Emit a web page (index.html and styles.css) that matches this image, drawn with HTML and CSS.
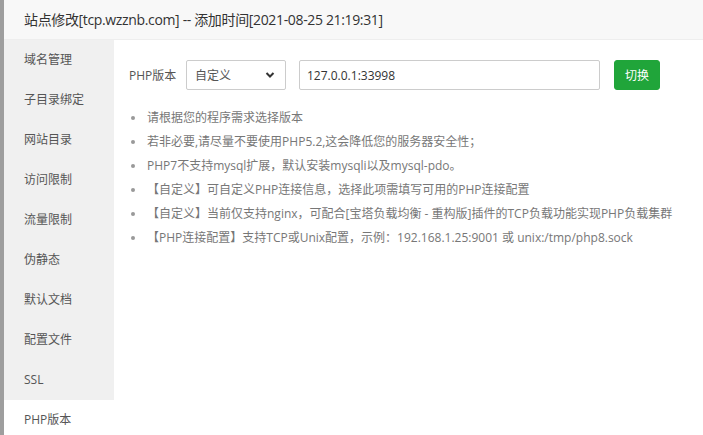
FILE: index.html
```html
<!DOCTYPE HTML>
<html>
	<head>
		<title>站点修改</title>
		<link rel="stylesheet" href="styles.css">
	</head>

	<body>
		<div class="page">
			<div class="shade"></div>
			<div class="layer">
				<div class="layer-title">站点修改[tcp.wzznb.com] -- 添加时间[2021-08-25 21:19:31]</div>
				<div class="layer-body">
					<div class="menu">
						<div class="menu-item">域名管理</div>
						<div class="menu-item">子目录绑定</div>
						<div class="menu-item">网站目录</div>
						<div class="menu-item">访问限制</div>
						<div class="menu-item">流量限制</div>
						<div class="menu-item">伪静态</div>
						<div class="menu-item">默认文档</div>
						<div class="menu-item">配置文件</div>
						<div class="menu-item">SSL</div>
						<div class="menu-item active">PHP版本</div>
					</div>
					<div class="content">
						<div class="line">
							<span class="label">PHP版本</span>
							<div class="select-wrap">
								<select class="bt-select">
									<option>自定义</option>
									<option>PHP-74</option>
								</select>
								<svg class="chevron" width="10" height="8" viewBox="0 0 10 8"><path d="M1.5 2 L5 5.5 L8.5 2" fill="none" stroke="#333" stroke-width="2"/></svg>
							</div>
							<input class="bt-input" type="text" value="127.0.0.1:33998">
							<button class="btn-success">切换</button>
						</div>
						<ul class="help">
							<li>请根据您的程序需求选择版本</li>
							<li>若非必要,请尽量不要使用PHP5.2,这会降低您的服务器安全性；</li>
							<li>PHP7不支持mysql扩展，默认安装mysqli以及mysql-pdo。</li>
							<li>【自定义】可自定义PHP连接信息，选择此项需填写可用的PHP连接配置</li>
							<li>【自定义】当前仅支持nginx，可配合[宝塔负载均衡 - 重构版]插件的TCP负载功能实现PHP负载集群</li>
							<li>【PHP连接配置】支持TCP或Unix配置，示例：192.168.1.25:9001 或 unix:/tmp/php8.sock</li>
						</ul>
					</div>
				</div>
			</div>
		</div>
	</body>
</html>
```

FILE: styles.css
```css
body {
	margin: 0;
	font-family: "Open Sans", "Noto Sans CJK SC", sans-serif;
	background-color: #fff;
}

.page {
	display: flex;
	height: 435px;
	overflow: hidden;
}

.shade {
	width: 4px;
	flex: none;
	background-color: #9e9e9e;
}

.layer {
	flex: 1;
	display: flex;
	flex-direction: column;
	background-color: #fff;
}

.layer-title {
	height: 39px;
	line-height: 39px;
	padding-left: 20px;
	font-size: 14px;
	letter-spacing: -0.35px;
	color: #333;
	background-color: #f8f8f8;
	border-bottom: 1px solid #eee;
}

.layer-body {
	flex: 1;
	display: flex;
}

.menu {
	width: 110px;
	flex: none;
}

.menu-item {
	height: 40px;
	line-height: 40px;
	padding-left: 20px;
	font-size: 12px;
	color: #555;
	background-color: #f0f0f0;
}

.menu-item.active {
	background-color: #fff;
}

.content {
	flex: 1;
	padding: 20px 15px;
}

.line {
	display: flex;
	align-items: center;
	height: 30px;
}

.label {
	font-size: 12px;
	color: #555;
	width: 57px;
}

.select-wrap {
	position: relative;
	width: 100px;
	height: 30px;
}

.bt-select {
	-webkit-appearance: none;
	appearance: none;
	width: 100px;
	height: 30px;
	box-sizing: border-box;
	border: 1px solid #ccc;
	border-radius: 2px;
	background-color: #fff;
	padding-left: 8px;
	font-family: "Open Sans", "Noto Sans CJK SC", sans-serif;
	font-size: 12px;
	color: #555;
	outline: none;
}

.chevron {
	position: absolute;
	right: 11px;
	top: 11px;
	pointer-events: none;
}

.bt-input {
	width: 301px;
	height: 30px;
	box-sizing: border-box;
	margin-left: 13px;
	border: 1px solid #ccc;
	border-radius: 2px;
	padding-left: 7px;
	font-family: "Open Sans", "Noto Sans CJK SC", sans-serif;
	font-size: 12px;
	color: #333;
	outline: none;
}

.btn-success {
	width: 46px;
	height: 30px;
	margin-left: 14px;
	border: 1px solid #20a53a;
	border-radius: 3px;
	background-color: #20a53a;
	color: #fff;
	font-family: "Open Sans", "Noto Sans CJK SC", sans-serif;
	font-size: 12px;
	padding: 0;
}

.help {
	list-style: none;
	margin: 16px 0 0 0;
	padding: 0;
}

.help li {
	position: relative;
	line-height: 24px;
	padding-left: 18px;
	font-size: 12px;
	color: #777;
}

.help li::before {
	content: "";
	position: absolute;
	left: 2px;
	top: 10px;
	width: 4px;
	height: 4px;
	border-radius: 50%;
	background-color: #999;
}
```
